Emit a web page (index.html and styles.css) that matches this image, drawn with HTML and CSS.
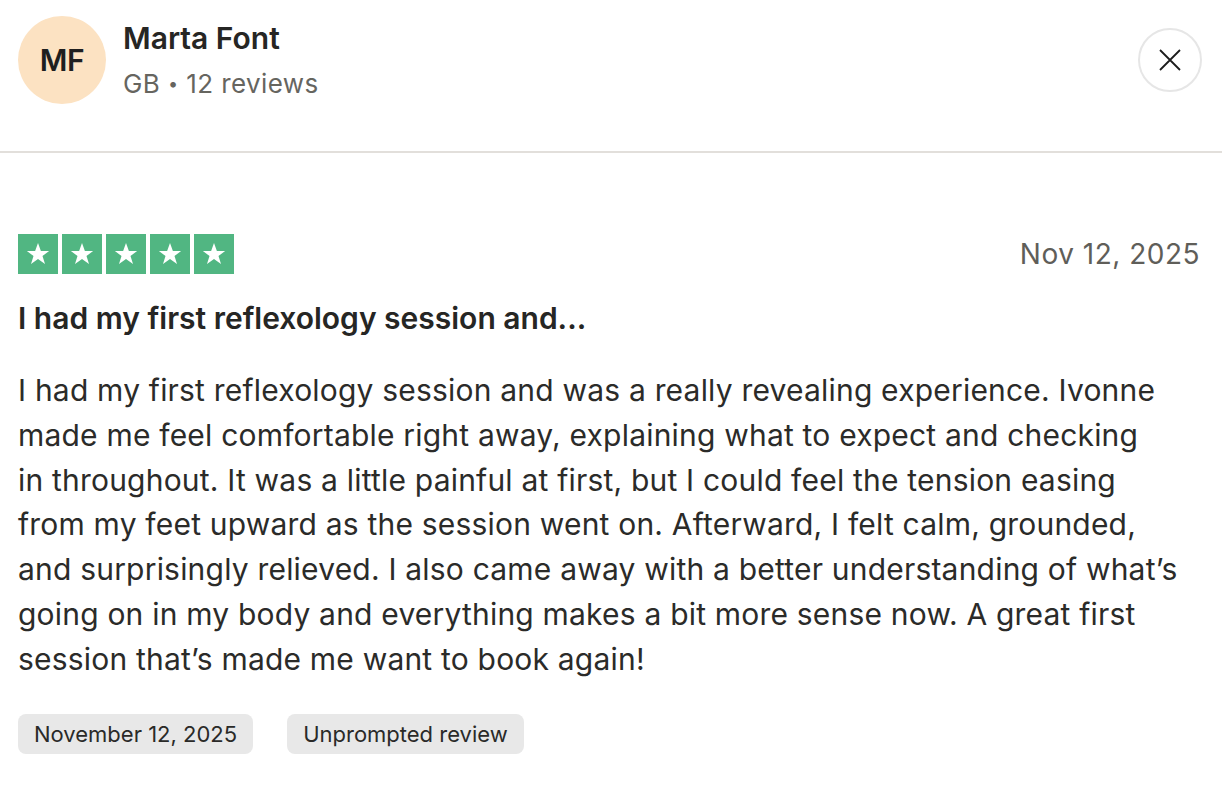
FILE: index.html
```
<!DOCTYPE html>
<html lang="en">
<head>
<meta charset="utf-8">
<link rel="stylesheet" href="styles.css">
</head>
<body>
<header class="profile">
  <div class="avatar">MF</div>
  <div class="who">
    <div class="name">Marta Font</div>
    <div class="meta">GB <span class="dot">•</span> 12 reviews</div>
  </div>
  <button class="close" aria-label="Close">
    <svg width="24" height="24" viewBox="0 0 24 24"><path d="M2 2 L22 22 M22 2 L2 22" stroke="#1c1c1c" stroke-width="1.8" fill="none"/></svg>
  </button>
</header>
<main class="review">
  <div class="top">
    <div class="stars">
      <span class="star"><svg viewBox="0 0 24 24"><path d="M12 3.2l2.3 6.3h6.6l-5.3 4 2 6.4L12 16l-5.6 3.9 2-6.4-5.3-4h6.6z" fill="#fff"/></svg></span>
      <span class="star"><svg viewBox="0 0 24 24"><path d="M12 3.2l2.3 6.3h6.6l-5.3 4 2 6.4L12 16l-5.6 3.9 2-6.4-5.3-4h6.6z" fill="#fff"/></svg></span>
      <span class="star"><svg viewBox="0 0 24 24"><path d="M12 3.2l2.3 6.3h6.6l-5.3 4 2 6.4L12 16l-5.6 3.9 2-6.4-5.3-4h6.6z" fill="#fff"/></svg></span>
      <span class="star"><svg viewBox="0 0 24 24"><path d="M12 3.2l2.3 6.3h6.6l-5.3 4 2 6.4L12 16l-5.6 3.9 2-6.4-5.3-4h6.6z" fill="#fff"/></svg></span>
      <span class="star"><svg viewBox="0 0 24 24"><path d="M12 3.2l2.3 6.3h6.6l-5.3 4 2 6.4L12 16l-5.6 3.9 2-6.4-5.3-4h6.6z" fill="#fff"/></svg></span>
    </div>
    <div class="date">Nov 12, 2025</div>
  </div>
  <h2 class="title">I had my first reflexology session and...</h2>
  <p class="body">I had my first reflexology session and was a really revealing experience. Ivonne<br>made me feel comfortable right away, explaining what to expect and checking<br>in throughout. It was a little painful at first, but I could feel the tension easing<br>from my feet upward as the session went on. Afterward, I felt calm, grounded,<br>and surprisingly relieved. I also came away with a better understanding of what’s<br>going on in my body and everything makes a bit more sense now. A great first<br>session that’s made me want to book again!</p>
  <div class="tags">
    <span class="tag">November 12, 2025</span>
    <span class="tag">Unprompted review</span>
  </div>
</main>
</body>
</html>
```
FILE: styles.css
```
* { box-sizing: border-box; }
html, body { margin: 0; background: #fff; }
body {
  font-family: Inter, "Noto Sans", sans-serif;
  color: #2b2b29;
  width: 1222px;
}
.profile {
  display: flex;
  align-items: center;
  height: 153px;
  padding: 0 20px 31px 18px;
  border-bottom: 2px solid #e2dfdb;
}
.avatar {
  width: 88px;
  height: 88px;
  border-radius: 50%;
  background: #fce2c2;
  display: flex;
  align-items: center;
  justify-content: center;
  font-weight: 600;
  font-size: 30px;
  color: #1f1f1f;
  letter-spacing: -0.3px;
}
.who { margin-left: 17px; flex: 1; display: flex; flex-direction: column; gap: 8px; }
.name { font-size: 30px; font-weight: 600; color: #262624; letter-spacing: 0; line-height: 40px; }
.meta { font-size: 26px; color: #66655f; line-height: 36px; letter-spacing: 0.4px; }
.dot { font-size: 18px; vertical-align: 3px; }
.close {
  width: 64px;
  height: 64px;
  border-radius: 50%;
  border: 2px solid #e6e6e6;
  background: #fff;
  display: flex;
  align-items: center;
  justify-content: center;
  padding: 0;
}
.review { padding: 80px 22px 0 18px; }
.top { display: flex; justify-content: space-between; align-items: center; height: 42px; }
.stars { display: flex; gap: 4px; }
.star {
  width: 40px; height: 40px;
  background: #51b682;
  display: flex; align-items: center; justify-content: center;
}
.star svg { width: 30px; height: 30px; }
.date { font-size: 28px; color: #5f5e59; letter-spacing: 0.5px; }
.title { margin: 23px 0 0; font-size: 30px; font-weight: 600; line-height: 40px; letter-spacing: 0; color: #262624; }
.body { margin: 30px 0 0; font-size: 30px; line-height: 44.8px; letter-spacing: 0.2px; color: #2b2b29; }
.tags { display: flex; gap: 34px; margin-top: 32px; }
.tag {
  background: #e8e8e8;
  border-radius: 8px;
  height: 40px;
  padding: 0 16px;
  display: flex; align-items: center;
  font-size: 22px;
  color: #2a2a28;
  letter-spacing: 0;
}
```
